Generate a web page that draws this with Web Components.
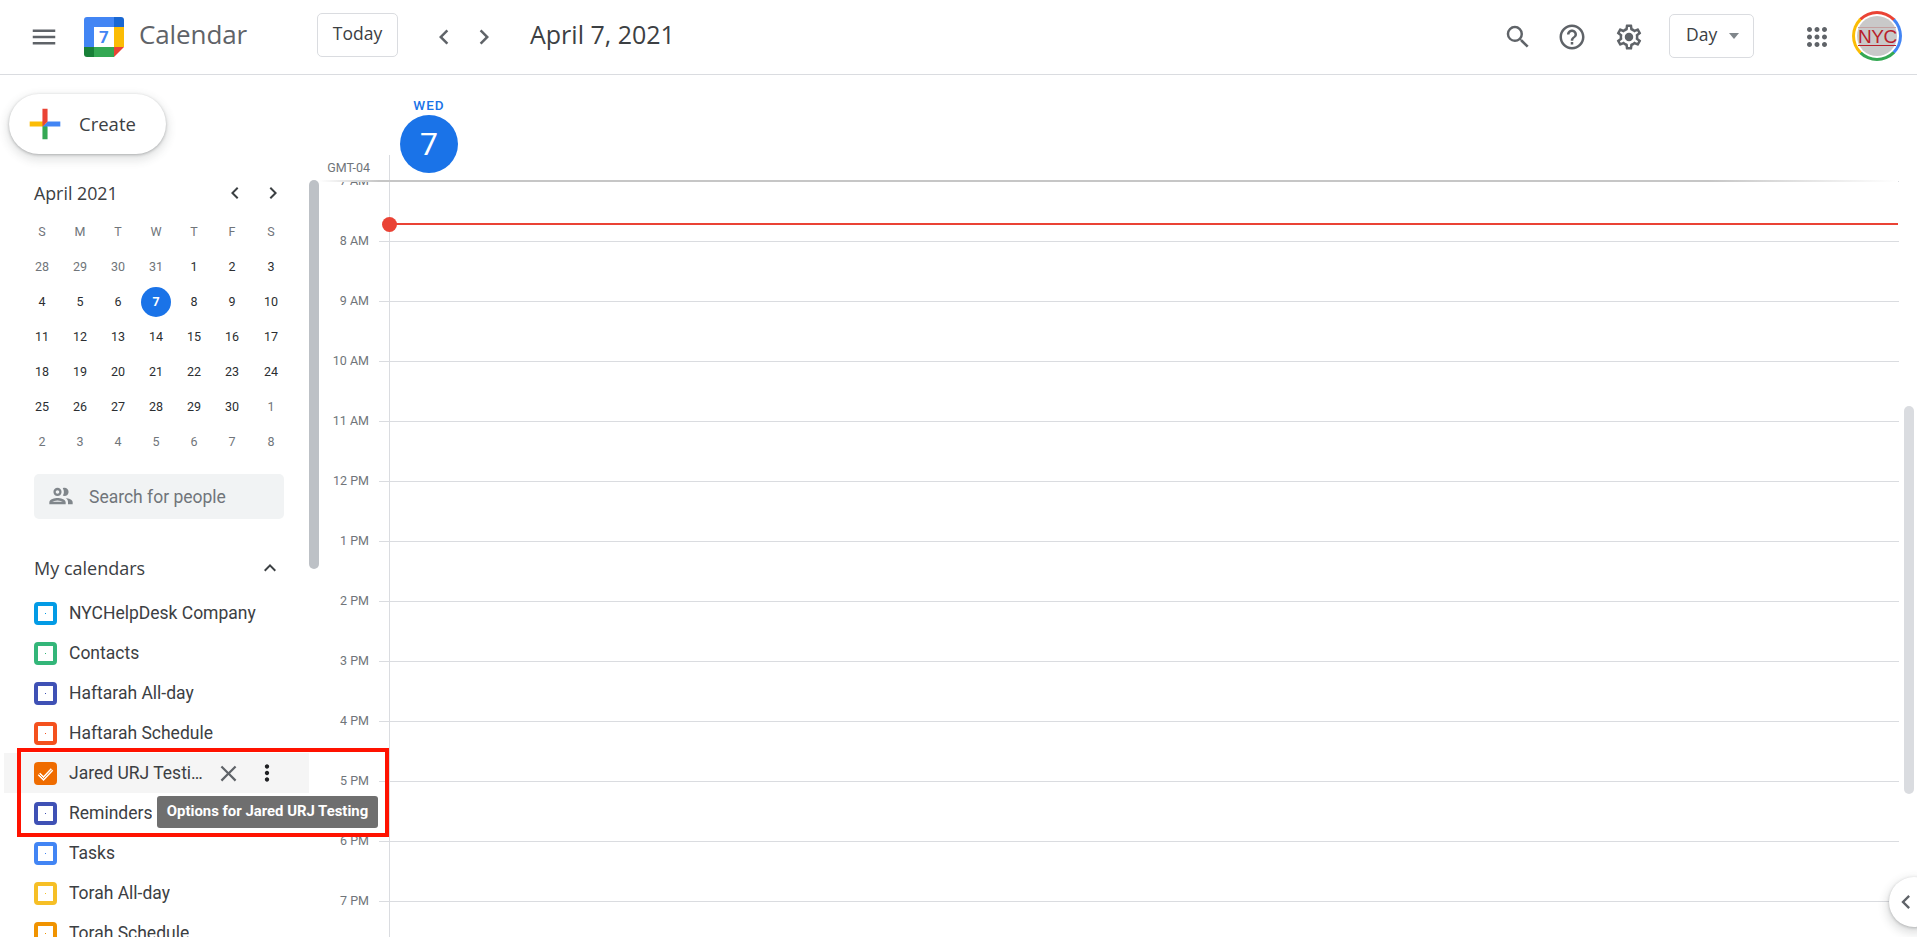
<!DOCTYPE html>
<html lang="en">
<head>
<meta charset="utf-8">
<title>Calendar</title>
<style>
html,body{margin:0;padding:0;height:100%;overflow:hidden;background:#fff;font-family:Roboto,"Liberation Sans",sans-serif;color:#3c4043}
</style>
</head>
<body>
<gc-app></gc-app>
<script>
const ICONS={
menu:'M3 18h18v-2H3v2zm0-5h18v-2H3v2zm0-7v2h18V6H3z',
search:'M15.5 14h-.79l-.28-.27A6.471 6.471 0 0 0 16 9.5 6.5 6.5 0 1 0 9.5 16c1.61 0 3.09-.59 4.23-1.57l.27.28v.79l5 4.99L20.49 19l-4.99-5zm-6 0C7.01 14 5 11.99 5 9.5S7.01 5 9.5 5 14 7.01 14 9.5 11.99 14 9.5 14z',
help:'M11 18h2v-2h-2v2zm1-16C6.48 2 2 6.48 2 12s4.48 10 10 10 10-4.48 10-10S17.52 2 12 2zm0 18c-4.41 0-8-3.59-8-8s3.59-8 8-8 8 3.59 8 8-3.59 8-8 8zm0-14c-2.21 0-4 1.79-4 4h2c0-1.1.9-2 2-2s2 .9 2 2c0 2-3 1.75-3 5h2c0-2.25 3-2.5 3-5 0-2.21-1.79-4-4-4z',
gear:'M19.43 12.98c.04-.32.07-.64.07-.98 0-.34-.03-.66-.07-.98l2.11-1.65c.19-.15.24-.42.12-.64l-2-3.46c-.09-.16-.26-.25-.44-.25-.06 0-.12.01-.17.03l-2.49 1c-.52-.4-1.08-.73-1.69-.98l-.38-2.65C14.46 2.18 14.25 2 14 2h-4c-.25 0-.46.18-.49.42l-.38 2.65c-.61.25-1.17.59-1.69.98l-2.49-1c-.06-.02-.12-.03-.18-.03-.17 0-.34.09-.43.25l-2 3.46c-.13.22-.07.49.12.64l2.11 1.65c-.04.32-.07.65-.07.98 0 .33.03.66.07.98l-2.11 1.65c-.19.15-.24.42-.12.64l2 3.46c.09.16.26.25.44.25.06 0 .12-.01.17-.03l2.49-1c.52.4 1.08.73 1.69.98l.38 2.65c.03.24.24.42.49.42h4c.25 0 .46-.18.49-.42l.38-2.65c.61-.25 1.17-.59 1.69-.98l2.49 1c.06.02.12.03.18.03.17 0 .34-.09.43-.25l2-3.46c.12-.22.07-.49-.12-.64l-2.11-1.65zm-1.98-1.71c.04.31.05.52.05.73 0 .21-.02.43-.05.73l-.14 1.13.89.7 1.08.84-.7 1.21-1.27-.51-1.04-.42-.9.68c-.43.32-.84.56-1.25.73l-1.06.43-.16 1.13-.2 1.35h-1.4l-.19-1.35-.16-1.13-1.06-.43c-.43-.18-.83-.41-1.23-.71l-.91-.7-1.06.43-1.27.51-.7-1.21 1.08-.84.89-.7-.14-1.13c-.03-.31-.05-.54-.05-.74s.02-.43.05-.73l.14-1.13-.89-.7-1.08-.84.7-1.21 1.27.51 1.04.42.9-.68c.43-.32.84-.56 1.25-.73l1.06-.43.16-1.13.2-1.35h1.39l.19 1.35.16 1.13 1.06.43c.43.18.83.41 1.23.71l.91.7 1.06-.43 1.27-.51.7 1.21-1.07.85-.89.7.14 1.13zM12 8.6c-1.88 0-3.4 1.52-3.4 3.4s1.52 3.4 3.4 3.4 3.4-1.52 3.4-3.4-1.52-3.4-3.4-3.4z',
apps:'M6 8c1.1 0 2-.9 2-2s-.9-2-2-2-2 .9-2 2 .9 2 2 2zm6 12c1.1 0 2-.9 2-2s-.9-2-2-2-2 .9-2 2 .9 2 2 2zm-6 0c1.1 0 2-.9 2-2s-.9-2-2-2-2 .9-2 2 .9 2 2 2zm0-6c1.1 0 2-.9 2-2s-.9-2-2-2-2 .9-2 2 .9 2 2 2zm6 0c1.1 0 2-.9 2-2s-.9-2-2-2-2 .9-2 2 .9 2 2 2zm4-8c0 1.1.9 2 2 2s2-.9 2-2-.9-2-2-2-2 .9-2 2zm-4 2c1.1 0 2-.9 2-2s-.9-2-2-2-2 .9-2 2 .9 2 2 2zm6 6c1.1 0 2-.9 2-2s-.9-2-2-2-2 .9-2 2 .9 2 2 2zm0 6c1.1 0 2-.9 2-2s-.9-2-2-2-2 .9-2 2 .9 2 2 2z',
left:'M15.41 7.41 14 6l-6 6 6 6 1.41-1.41L10.83 12z',
right:'M10 6 8.59 7.41 13.17 12l-4.58 4.59L10 18l6-6z',
up:'M12 8l-6 6 1.41 1.41L12 10.83l4.59 4.58L18 14z',
people:'M9 13.75c-2.34 0-7 1.17-7 3.5V19h14v-1.75c0-2.33-4.66-3.5-7-3.5zM4.34 17c.84-.58 2.87-1.25 4.66-1.25s3.82.67 4.66 1.25H4.34zM9 12c1.93 0 3.5-1.57 3.5-3.5S10.93 5 9 5 5.5 6.57 5.5 8.5 7.07 12 9 12zm0-5c.83 0 1.5.67 1.5 1.5S9.83 10 9 10s-1.5-.67-1.5-1.5S8.17 7 9 7zm7.04 6.81c1.16.84 1.96 1.96 1.96 3.44V19h4v-1.75c0-2.02-3.5-3.17-5.96-3.44zM15 12c1.93 0 3.5-1.57 3.5-3.5S16.93 5 15 5c-.54 0-1.04.13-1.5.35.63.89 1 1.98 1 3.15s-.37 2.26-1 3.15c.46.22.96.35 1.5.35z',
close:'M19 6.41 17.59 5 12 10.59 6.41 5 5 6.41 10.59 12 5 17.59 6.41 19 12 13.41 17.59 19 19 17.59 13.41 12z',
more:'M12 8c1.1 0 2-.9 2-2s-.9-2-2-2-2 .9-2 2 .9 2 2 2zm0 2c-1.1 0-2 .9-2 2s.9 2 2 2 2-.9 2-2-.9-2-2-2zm0 6c-1.1 0-2 .9-2 2s.9 2 2 2 2-.9 2-2-.9-2-2-2z'
};
function def(tag,html,init){
  customElements.define(tag,class extends HTMLElement{
    constructor(){super();this.attachShadow({mode:'open'});}
    connectedCallback(){ if(this._d)return; this._d=1; this.shadowRoot.innerHTML=typeof html==='function'?html(this):html; if(init)init(this); }
  });
}
const SANS='"Open Sans",Roboto,sans-serif';

def('gc-icon',el=>{
  const s=el.getAttribute('size')||30,b=el.getAttribute('box')||40,c=el.getAttribute('color')||'#5f6368';
  return `<style>:host{display:flex;align-items:center;justify-content:center;flex:none;width:${b}px;height:${b}px}svg{display:block;flex:none}</style>
  <svg width="${s}" height="${s}" viewBox="0 0 24 24"><path fill="${c}" d="${ICONS[el.getAttribute('name')]}"/></svg>`;
});

def('gc-logo',`<style>:host{display:block;flex:none;width:40px;height:40px;position:relative}
svg{display:block}
span{position:absolute;inset:0;display:flex;align-items:center;justify-content:center;font:700 17px Roboto,sans-serif;color:#4285f4}</style>
<svg width="40" height="40" viewBox="0 0 40 40">
<path fill="#4285f4" d="M3 0h27v10H10v20H0V3a3 3 0 0 1 3-3z"/>
<path fill="#1967d2" d="M30 0h7a3 3 0 0 1 3 3v7H30z"/>
<path fill="#fbbc04" d="M30 10h10v20H30z"/>
<path fill="#34a853" d="M10 30h20v10H10z"/>
<path fill="#188038" d="M0 30h10v10H3a3 3 0 0 1-3-3z"/>
<path fill="#ea4335" d="M30 30h10L30 40z"/>
<path fill="#fff" d="M10 10h20v20H10z"/>
</svg><span>7</span>`);

def('gc-avatar',`<style>:host{display:flex;flex:none;width:50px;height:50px;border-radius:50%;align-items:center;justify-content:center;
background:conic-gradient(from -45deg,#ea4335 0 25%,#4285f4 25% 50%,#34a853 50% 75%,#fbbc04 75% 100%)}
.gap{width:44px;height:44px;border-radius:50%;background:#fff;display:flex;align-items:center;justify-content:center}
.pic{width:40px;height:40px;border-radius:50%;background:#c9c9c9;display:flex;align-items:center;justify-content:center}
.t{font:400 19px/17px "Liberation Sans",sans-serif;color:#b8202a;letter-spacing:-.5px;white-space:nowrap;border-top:1px solid #c4a0a0;border-bottom:1px solid #b8202a;width:38px;text-align:center;height:17px}</style>
<div class="gap"><div class="pic"><div class="t">NYC</div></div></div>`);

def('gc-outline-btn',el=>`<style>:host{display:flex;flex:none;box-sizing:border-box;align-items:center;height:44px;border:1px solid #dadce0;border-radius:5px;font:500 17.5px ${SANS};color:#3c4043;background:#fff;padding-bottom:4px}
.c{border:0;border-top:6px solid #80868b;border-left:5.5px solid transparent;border-right:5.5px solid transparent;margin:4px 0 0 12px}</style>
<slot></slot>${el.hasAttribute('caret')?'<span class="c"></span>':''}`);

def('gc-header',`<style>:host{display:flex;flex:none;align-items:center;box-sizing:border-box;height:75px;border-bottom:1px solid #dadce0;padding:0 15px 1px 24px;background:#fff}
.name{flex:none;width:178px;margin:-6px 0 0 15px;font:400 26px ${SANS};color:#5f6368;letter-spacing:-.1px}
.title{margin:-6px 0 0 26px;font:400 25px ${SANS};color:#3c4043;letter-spacing:0}
.sp{flex:1}
gc-logo{margin-left:20px}
.today{width:81px;justify-content:center;margin-top:-3px}
.day{width:85px;padding-left:16px;box-sizing:border-box;margin-top:-1px}
.nav1{margin-left:26px}.ml14{margin-left:14px}.ml16{margin-left:17px}.ml21{margin-left:20px}.ml44{margin-left:43px}.ml15{margin-left:15px}
gc-avatar{margin-top:-1px}</style>
<gc-icon name="menu"></gc-icon><gc-logo></gc-logo><div class="name">Calendar</div>
<gc-outline-btn class="today" style="justify-content:center">Today</gc-outline-btn>
<gc-icon class="nav1" name="left"></gc-icon><gc-icon name="right"></gc-icon>
<div class="title">April 7, 2021</div><div class="sp"></div>
<gc-icon name="search"></gc-icon><gc-icon class="ml14" name="help"></gc-icon><gc-icon class="ml16" name="gear"></gc-icon>
<gc-outline-btn class="day ml21" caret>Day</gc-outline-btn>
<gc-icon class="ml44" name="apps"></gc-icon><gc-avatar class="ml15"></gc-avatar>`);

def('gc-create',`<style>:host{display:flex;align-items:center;box-sizing:border-box;width:157px;height:60px;border-radius:30px;background:#fff;padding-left:13px;
box-shadow:0 1px 3px 0 rgba(60,64,67,.35),0 4px 8px 3px rgba(60,64,67,.12);font:500 18.5px ${SANS};color:#3c4043}
svg{display:block;flex:none}span{margin:-1px 0 0 11px}</style>
<svg width="46" height="46" viewBox="0 0 36 36"><path fill="#34A853" d="M16 16v14h4V20z"/><path fill="#4285F4" d="M30 16H20l-4 4h14z"/><path fill="#FBBC05" d="M6 16v4h10l4-4z"/><path fill="#EA4335" d="M20 16V6h-4v14z"/></svg><span>Create</span>`);

def('gc-minical',el=>{
  const heads=['S','M','T','W','T','F','S'];
  const cells=[];
  const days=[[28,1],[29,1],[30,1],[31,1],[1],[2],[3]];
  for(let d=4;d<=30;d++)days.push([d]);
  [1,2,3,4,5,6,7,8].forEach(d=>days.push([d,1]));
  heads.forEach(h=>cells.push(`<div class="c h">${h}</div>`));
  days.forEach(([d,o])=>{
    const sel=d===7&&!o;
    cells.push(`<div class="c${o?' o':''}">${sel?`<b>${d}</b>`:d}</div>`);
  });
  return `<style>:host{display:block;margin-top:24px;padding-left:23px;width:289px;box-sizing:border-box}
  .top{display:flex;align-items:center;height:32px;padding-left:11px}
  .m{flex:1;font:500 17.8px ${SANS};color:#3c4043;margin-top:-3px}
  .grid{display:grid;grid-template-columns:repeat(6,38px) 40px;grid-auto-rows:35px;margin-top:4px}
  .c{display:flex;align-items:center;justify-content:center;font:400 12.5px Roboto,sans-serif;color:#2b2e31;padding-bottom:1px;box-sizing:border-box}
  .h,.o{color:#70757a}
  b{display:flex;align-items:center;justify-content:center;width:30px;height:30px;border-radius:50%;background:#1a73e8;color:#fff;font-weight:700;font-size:12.5px;margin-top:1px}
  gc-icon+gc-icon{margin-left:6px}.nav{display:flex;margin-top:-2px}</style>
  <div class="top"><div class="m">April 2021</div><div class="nav"><gc-icon name="left" size="24" box="32" color="#3c4043"></gc-icon><gc-icon name="right" size="24" box="32" color="#3c4043"></gc-icon></div></div>
  <div class="grid">${cells.join('')}</div>`;
});

def('gc-people-search',`<style>:host{display:flex;align-items:center;box-sizing:border-box;margin:15px 0 0 34px;width:250px;height:45px;border-radius:5px;background:#f1f3f4;padding-left:13px;font:400 17.5px Roboto,sans-serif;color:#70757a}
span{margin-left:14px}gc-icon{margin-top:-2px}</style><gc-icon name="people" size="28" box="28" color="#80868b"></gc-icon><span>Search for people</span>`);

def('gc-section',`<style>:host{display:flex;align-items:center;box-sizing:border-box;margin:30px 0 4px 34px;width:248px;height:40px;font:500 18px ${SANS};color:#3c4043}
.t{flex:1;margin-top:-2px}gc-icon{margin-top:-2px}</style><div class="t"><slot></slot></div><gc-icon name="up" size="24" box="24" color="#3c4043"></gc-icon>`);

def('gc-cal-row',el=>{
  const c=el.getAttribute('color'),on=el.hasAttribute('active');
  return `<style>:host{display:flex;align-items:center;box-sizing:border-box;height:40px;width:305px;margin-left:4px;padding-left:30px;font:400 17.5px Roboto,sans-serif;color:#3c4043;${on?'background:#f5f5f5;':''}}
  .b{flex:none;box-sizing:border-box;width:23px;height:23px;border:4px solid ${c};border-radius:4px;display:flex;align-items:center;justify-content:center;${on?`background:${c};`:''}margin-top:1px}
  .b i{display:block;width:1px;height:1px;background:${c}}
  .b svg{display:block;margin:-4px;flex:none}
  .n{margin-left:12px;white-space:nowrap;overflow:hidden;text-overflow:ellipsis;${on?'width:136px;':''}}
  .x{margin-left:7px}.k{margin-left:7px}</style>
  <div class="b">${on?`<svg width="23" height="23" viewBox="0 0 23 23"><path d="M5 12l4.500 4.500L18 7.500" fill="none" stroke="#fff" stroke-width="3.400"/><path d="M5 12l4.500 4.500L18 7.500" fill="none" stroke="${c}" stroke-width=".9"/></svg>`:'<i></i>'}</div>
  <div class="n"><slot></slot></div>
  ${on?'<gc-icon class="x" name="close" size="27" box="32"></gc-icon><gc-icon class="k" name="more" size="26" box="32" color="#202124"></gc-icon>':''}`;
});

def('gc-scrollbar',el=>`<style>:host{position:absolute;display:block;width:10px;border-radius:5px;background:${el.getAttribute('color')};z-index:3}</style>`);

def('gc-sidebar',`<style>:host{display:block;flex:none;width:319px;position:relative;overflow:hidden;background:#fff}
gc-create{margin:19px 0 0 9px}
gc-scrollbar{left:309px;top:105px;height:389px}</style>
<gc-create></gc-create><gc-minical></gc-minical><gc-people-search></gc-people-search>
<gc-section>My calendars</gc-section><slot></slot>
<gc-scrollbar color="#bdc1c6"></gc-scrollbar>`);

def('gc-day-head',`<style>:host{display:flex;flex:none;height:106px;position:relative;z-index:2}
:host::after{content:"";position:absolute;left:0;right:19px;bottom:-1px;height:2px;background:linear-gradient(90deg,#fff 0,#c6c6c6 60px,#c6c6c6 88%,#fff 100%)}
.g{flex:none;align-self:flex-end;box-sizing:border-box;width:70px;height:26px;padding:1px 19px 0 0;text-align:right;font:400 12.5px/24px Roboto,sans-serif;color:#70757a}
.d{flex:none;align-self:flex-end;width:1px;height:26px;background:#dadce0}
.col{flex:none;width:58px;margin-left:10px;display:flex;flex-direction:column;align-items:center}
.w{margin-top:22px;height:18px;font:500 13.5px/16px Roboto,sans-serif;letter-spacing:1px;color:#1a73e8}
.n{width:58px;height:58px;border-radius:50%;background:#1a73e8;color:#fff;display:flex;align-items:center;justify-content:center;font:400 32px Roboto,sans-serif}</style>
<div class="g">GMT-04</div><div class="d"></div><div class="col"><div class="w">WED</div><div class="n">7</div></div>`);

def('gc-hour',`<style>:host{display:flex;height:60px;flex:none}
.l{flex:none;box-sizing:border-box;width:60px;padding-right:10px;text-align:right;font:400 12.5px/14px Roboto,sans-serif;color:#70757a;height:14px;margin-top:-7px}
.t{flex:1;margin-right:18px;box-sizing:border-box;border-top:1px solid #dadce0;background:linear-gradient(#dadce0,#dadce0) 10px -1px/1px 61px no-repeat}</style>
<div class="l"><slot></slot></div><div class="t"></div>`);

def('gc-day-grid',`<style>:host{display:flex;flex-direction:column;flex:1;min-height:0;overflow:hidden;position:relative}
.now{position:absolute;left:70px;right:19px;top:42px;height:2px;background:#ea4335;z-index:1}
.dot{position:absolute;left:63px;top:36px;width:15px;height:15px;border-radius:50%;background:#ea4335;z-index:1}</style>
<slot></slot><div class="now"></div><div class="dot"></div>`);

def('gc-main',`<style>:host{display:flex;flex-direction:column;flex:1;min-width:0;position:relative;background:#fff}
gc-scrollbar{right:3px;top:331px;height:388px}
.fab{position:absolute;left:1570px;top:802px;width:50px;height:50px;border-radius:50%;background:#fff;box-shadow:0 1px 3px 0 rgba(60,64,67,.3),0 4px 8px 3px rgba(60,64,67,.15);z-index:4;display:flex;align-items:center;padding-left:3px;box-sizing:border-box}</style>
<gc-day-head></gc-day-head><gc-day-grid><slot></slot></gc-day-grid>
<gc-scrollbar color="#dadce0"></gc-scrollbar>
<div class="fab"><gc-icon name="left" size="28" box="28"></gc-icon></div>`);

def('gc-callout',`<style>:host{position:absolute;left:17px;top:748px;width:372px;height:89px;box-sizing:border-box;border:4px solid #ff1200;z-index:6;display:block}</style>`);
def('gc-tooltip',`<style>:host{position:absolute;left:157px;top:796px;width:221px;height:32px;box-sizing:border-box;background:#6f6f6f;border-radius:3px;color:#fff;font:700 14.9px/31px Roboto,sans-serif;text-align:center;z-index:7;white-space:nowrap}</style><slot></slot>`);

const CALS=[['NYCHelpDesk Company','#039be5'],['Contacts','#33b679'],['Haftarah All-day','#3f51b5'],['Haftarah Schedule','#f4511e'],['Jared URJ Testing','#ef6c00',1],['Reminders','#3f51b5'],['Tasks','#4285f4'],['Torah All-day','#f6bf26'],['Torah Schedule','#f09300']];
const HOURS=['7 AM','8 AM','9 AM','10 AM','11 AM','12 PM','1 PM','2 PM','3 PM','4 PM','5 PM','6 PM','7 PM'];
def('gc-app',`<style>:host{display:flex;flex-direction:column;height:100vh;position:relative;overflow:hidden}
.b{display:flex;flex:1;min-height:0}</style>
<gc-header></gc-header>
<div class="b">
<gc-sidebar>${CALS.map(c=>`<gc-cal-row color="${c[1]}"${c[2]?' active':''}>${c[0]}</gc-cal-row>`).join('')}</gc-sidebar>
<gc-main>${HOURS.map(h=>`<gc-hour>${h}</gc-hour>`).join('')}</gc-main>
</div>
<gc-callout></gc-callout><gc-tooltip>Options for Jared URJ Testing</gc-tooltip>`);
</script>
</body>
</html>
